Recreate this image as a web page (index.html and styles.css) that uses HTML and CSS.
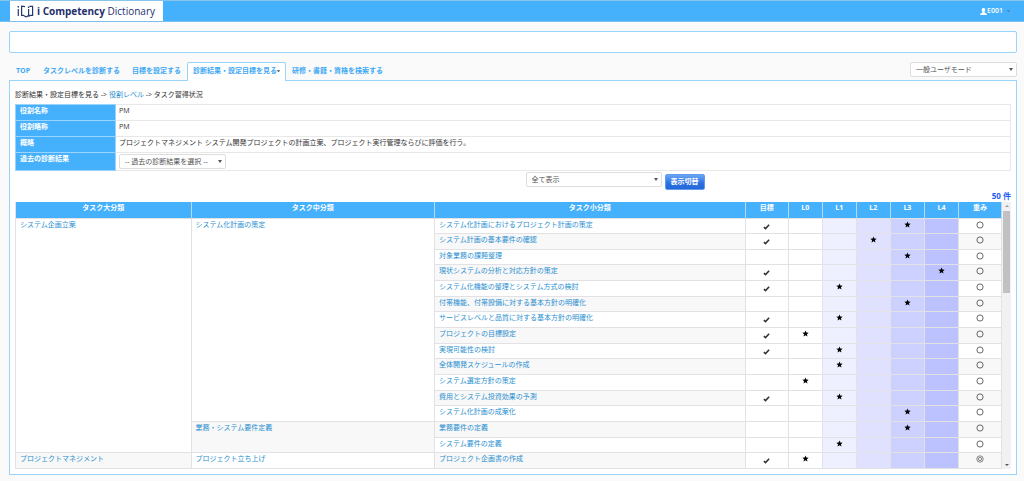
FILE: index.html
```html
<!DOCTYPE html>
<html lang="ja">
<head>
<meta charset="utf-8">
<title>i Competency Dictionary</title>
<link rel="stylesheet" href="styles.css">
</head>
<body>
<svg class="defs" aria-hidden="true">
  <symbol id="check" viewBox="0 0 8 8"><path d="M1 4.7 2.9 6.4 7 2" fill="none" stroke="#333" stroke-width="1.8"/></symbol>
  <symbol id="star" viewBox="0 0 8 8"><path d="M4 .5 5 2.9 7.6 3.1 5.6 4.8 6.3 7.4 4 6 1.7 7.4 2.4 4.8.4 3.1 3 2.9Z" fill="#000"/></symbol>
  <symbol id="circle" viewBox="0 0 8 8"><circle cx="4" cy="4" r="3.1" fill="none" stroke="#444" stroke-width=".8"/></symbol>
  <symbol id="double" viewBox="0 0 8 8"><circle cx="4" cy="4" r="3.2" fill="none" stroke="#555" stroke-width=".7"/><circle cx="4" cy="4" r="1.6" fill="none" stroke="#555" stroke-width=".7"/></symbol>
</svg>
<header class="topbar">
  <a class="logo" href="#">
    <svg class="logo-mark" viewBox="0 0 17 13" fill="none" stroke="#25386f" stroke-width="1.2"><path d="M1.3 3.9V11M8 1.6 4.6 1.2V10.3H6.4L9 12M9 12 11.6 10.6M11.6 4V10.6M12.4 1.3H15.6V10.4H13L11.6 11.4"/><path d="M.6 1.8H2M10.9 2.2H12.2" stroke-width="1.4"/></svg>
    <span class="logo-text"><b>i Competency</b> Dictionary</span>
  </a>
  <button class="user" type="button">
    <svg class="user-icon" viewBox="0 0 7 7" fill="#fff"><path d="M3.5 0C4.9 0 5.4.9 5.2 2.2 5.1 3 4.6 3.4 4.6 4.2 4.8 5 7 4.9 7 7H0C0 4.9 2.2 5 2.4 4.2 2.4 3.4 1.9 3 1.8 2.2 1.6.9 2.1 0 3.5 0Z"/></svg><span>E001</span><i class="caret"></i>
  </button>
</header>
<main class="page">
  <section class="notice"></section>
  <div class="navrow">
    <nav class="tabs">
      <a class="tab" href="#">TOP</a>
      <a class="tab" href="#">タスクレベルを診断する</a>
      <a class="tab" href="#">目標を設定する</a>
      <a class="tab active" href="#">診断結果・設定目標を見る<i class="caret"></i></a>
      <a class="tab" href="#">研修・書籍・資格を検索する</a>
    </nav>
    <span class="select mode"><select aria-label="モード"><option>一般ユーザモード</option></select></span>
  </div>
  <section class="panel">
    <div class="crumbs">診断結果・設定目標を見る -&gt; <a href="#">役割レベル</a> -&gt; タスク習得状況</div>
    <table class="info">
      <tr><th scope="row">役割名称</th><td>PM</td></tr>
      <tr><th scope="row">役割略称</th><td>PM</td></tr>
      <tr><th scope="row">概略</th><td>プロジェクトマネジメント システム開発プロジェクトの計画立案、プロジェクト実行管理ならびに評価を行う。</td></tr>
      <tr class="past"><th scope="row"><label for="past">過去の診断結果</label></th><td><span class="select history"><select id="past"><option>-- 過去の診断結果を選択 --</option></select></span></td></tr>
    </table>
    <div class="filter">
      <span class="select show"><select aria-label="表示"><option>全て表示</option></select></span>
      <button class="switch" type="button">表示切替</button>
    </div>
    <div class="count">50 件</div>
    <div class="listing">
      <table class="tasks">
        <colgroup><col class="c-large"><col class="c-mid"><col class="c-small"><col class="c-goal"><col class="c-lv"><col class="c-lv"><col class="c-lv"><col class="c-lv"><col class="c-lv"><col class="c-weight"></colgroup>
        <thead><tr><th>タスク大分類</th><th>タスク中分類</th><th>タスク小分類</th><th>目標</th><th>L0</th><th>L1</th><th>L2</th><th>L3</th><th>L4</th><th>重み</th></tr></thead>
        <tbody id="rows"></tbody>
      </table>
      <div class="scroll" aria-hidden="true"><i class="up"></i><i class="thumb"></i><i class="down"></i></div>
    </div>
  </section>
</main>
<script src="tasks.js"></script>
</body>
</html>
```
FILE: styles.css
```css
* { box-sizing: border-box; }
body {
  margin: 0;
  background: #fafafa;
  color: #333;
  font-family: "Open Sans", "Noto Sans CJK JP", sans-serif;
  font-size: 7px;
  line-height: 10px;
}
a { color: #2a8fd0; text-decoration: none; }
button, select { font: inherit; }
.defs { display: none; }

.topbar {
  display: flex;
  justify-content: space-between;
  align-items: center;
  height: 22px;
  padding: 0 14px 0 10px;
  background: #45b0fc;
  border-top: 1px solid #86c4ec;
  border-bottom: 1px solid #7cc1ee;
}
.logo {
  display: flex;
  align-items: center;
  gap: 3px;
  height: 20px;
  padding: 0 8px 0 7px;
  background: #fff;
  color: #1d2f6f;
  font-size: 10px;
  line-height: 20px;
  white-space: nowrap;
}
.logo-mark { width: 17px; height: 13px; }
.user {
  display: flex;
  align-items: center;
  height: 18px;
  padding: 0;
  border: 0;
  background: none;
  color: #fff;
  font-weight: 600;
}
.user-icon { width: 7px; height: 7px; }
.caret {
  display: inline-block;
  border: 1px solid transparent;
  border-top: 2px solid #666;
  border-bottom: 0;
  width: 3px;
  vertical-align: middle;
}
.user .caret { margin-left: 4px; border-top-color: #4c86b0; }

.page { padding: 9px 7px 0 9px; }
.notice {
  height: 22px;
  border: 1px solid #9ad4fb;
  border-radius: 2px;
  background: #fff;
}
.navrow {
  display: flex;
  justify-content: space-between;
  align-items: flex-start;
  margin-top: 9px;
}
.tabs { display: flex; }
.tab {
  height: 19px;
  margin-bottom: -1px;
  padding: 3px 5px;
  border: 1px solid transparent;
  border-bottom: 0;
  color: #3fa9f5;
  font-weight: 600;
  white-space: nowrap;
}
.tab:first-child { padding: 3px 6px; font-weight: 700; }
.tab.active {
  position: relative;
  background: #fff;
  border-color: #9ad4fb;
  border-radius: 2px 2px 0 0;
}
.select { display: inline-block; position: relative; height: 15px; vertical-align: top; }
.select select {
  display: block;
  width: 100%;
  height: 100%;
  padding: 0 5px;
  appearance: none;
  border: 1px solid #ddd;
  border-radius: 2px;
  background: #fff;
  color: #555;
}
.select::after {
  content: "";
  position: absolute;
  right: 4px;
  top: 6px;
  border: 2px solid transparent;
  border-top: 3px solid #555;
  border-bottom: 0;
  width: 0;
}
.mode { width: 107px; }
.history { width: 107px; }
.show { width: 136px; }

.panel {
  padding: 9px 5px 5px;
  border: 1px solid #9ad4fb;
  background: #fff;
}
.crumbs { height: 14px; }
table { border-collapse: collapse; width: 100%; }
.info th, .info td {
  height: 16px;
  padding: 1px 4px 4px;
  border: 1px solid #e8e8e8;
  text-align: left;
  vertical-align: top;
}
.info th { width: 100px; background: #45b0fc; color: #fff; border-color: #9ad4fb; }
.info td { padding-left: 3px; }
.info .past th { height: 18px; }
.info .past td { padding: 1px 4px 1px 3px; }
.filter {
  display: flex;
  justify-content: center;
  gap: 3px;
  margin-top: 1px;
  padding-left: 204px;
}
.switch {
  height: 16px;
  margin-top: 2px;
  padding: 0 5px;
  border: 1px solid #5f9cf0;
  border-radius: 2px;
  background: linear-gradient(#6ba6f4, #2a6fe0 60%, #2467d8);
  color: #fff;
  font-weight: 600;
}
.count { margin-top: 1px; color: #1f5ff0; font-weight: 700; font-size: 8px; text-align: right; }
.listing { display: flex; margin-top: 1px; }
.tasks { flex: 1; table-layout: fixed; height: 267px; }
.tasks th { height: 16px; padding: 0 4px 4px; background: #45b0fc; color: #fff; border: 1px solid #b5d9f2; border-width: 0 1px; }
.tasks td { padding: 1px 4px 2px; border: 1px solid #e2e2e6; vertical-align: top; }
.tasks tr > :first-child { border-left-color: #e2e2e6; }
.c-mid { width: 24.7%; }
.c-large { width: 17.8%; }
.c-small { width: 31.5%; }
.c-goal { width: 43px; }
.c-lv { width: 34px; }
.c-weight { width: 43px; }
.tasks .odd { background: #f8f8f8; }
.tasks .mark { background: #fff; text-align: center; padding: 2px 0 0; }
.tasks .goal { padding-top: 4px; }
.tasks .l1 { background: #eef0ff; }
.tasks .l2 { background: #dfe1ff; }
.tasks .l3 { background: #cdd1ff; }
.tasks .l4 { background: #bcc2ff; }
.tasks .weight.odd { background: #f8f8f8; }
.icon { display: block; width: 8px; height: 8px; margin: 0 auto; }
.goal .icon, .level .icon { width: 7px; height: 7px; }
.scroll {
  display: flex;
  flex-direction: column;
  align-items: center;
  width: 9px;
  background: #f1f1f1;
}
.up, .down { width: 4px; border: 2px solid transparent; }
.up { margin-top: 3px; border-top: 0; border-bottom-color: #999; }
.thumb { width: 7px; height: 82px; margin: 4px 0 auto; background: #c1c1c1; }
.down { margin-bottom: 3px; border-bottom: 0; border-top-color: #555; }
```
FILE: tasks.js
```javascript
const tasks = [
  { large: ["システム企画立案", 15], mid: ["システム化計画の策定", 13], name: "システム化計画におけるプロジェクト計画の策定", goal: true, level: 3 },
  { name: "システム計画の基本要件の確認", goal: true, level: 2 },
  { name: "対象業務の課題整理", level: 3 },
  { name: "現状システムの分析と対応方針の策定", goal: true, level: 4 },
  { name: "システム化機能の整理とシステム方式の検討", goal: true, level: 1 },
  { name: "付帯機能、付帯設備に対する基本方針の明確化", level: 3 },
  { name: "サービスレベルと品質に対する基本方針の明確化", goal: true, level: 1 },
  { name: "プロジェクトの目標設定", goal: true, level: 0 },
  { name: "実現可能性の検討", goal: true, level: 1 },
  { name: "全体開発スケジュールの作成", level: 1 },
  { name: "システム選定方針の策定", level: 0 },
  { name: "費用とシステム投資効果の予測", goal: true, level: 1 },
  { name: "システム化計画の成案化", level: 3 },
  { mid: ["業務・システム要件定義", 2, "odd"], name: "業務要件の定義", level: 3 },
  { name: "システム要件の定義", level: 1 },
  { large: ["プロジェクトマネジメント", 1, "odd"], mid: ["プロジェクト立ち上げ", 1], name: "プロジェクト企画書の作成", goal: true, level: 0, weight: "double" }
];

const icon = id => `<svg class="icon"><use href="#${id}"/></svg>`;
const group = g => g ? `<td rowspan="${g[1]}" class="${g[2] || ""}"><a href="#">${g[0]}</a></td>` : "";

document.getElementById("rows").innerHTML = tasks.map((t, i) => {
  const odd = i % 2 ? "odd" : "";
  const levels = [0, 1, 2, 3, 4].map(n => `<td class="mark level l${n}">${t.level === n ? icon("star") : ""}</td>`).join("");
  return `<tr>${group(t.large)}${group(t.mid)}<td class="${odd}"><a href="#">${t.name}</a></td>` +
    `<td class="mark goal">${t.goal ? icon("check") : ""}</td>${levels}` +
    `<td class="mark weight ${odd}">${icon(t.weight || "circle")}</td></tr>`;
}).join("");
```
